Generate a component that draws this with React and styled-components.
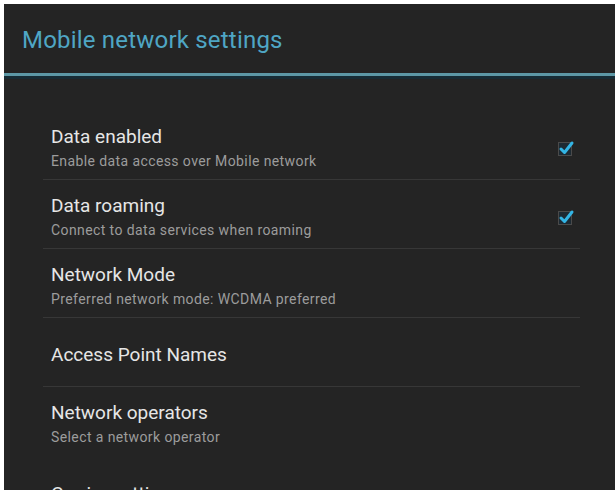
import React from "react";
import styled, { createGlobalStyle } from "styled-components";

const GlobalStyle = createGlobalStyle`
  html, body {
    margin: 0;
    padding: 0;
    background: #ffffff;
    overflow: hidden;
  }
  body {
    font-family: Roboto, "Noto Sans", "Liberation Sans", sans-serif;
  }
`;

const items = [
  { title: "Data enabled", summary: "Enable data access over Mobile network", checked: true },
  { title: "Data roaming", summary: "Connect to data services when roaming", checked: true },
  { title: "Network Mode", summary: "Preferred network mode: WCDMA preferred" },
  { title: "Access Point Names" },
  { title: "Network operators", summary: "Select a network operator", last: true },
];

const CheckMark = () => (
  <svg width="20" height="20" viewBox="0 0 20 20">
    <rect x="2.5" y="4.5" width="13" height="13" fill="#1d2a33" stroke="#4a4a4a" strokeWidth="1" />
    <path d="M5 11 L8.5 14.5 L16 5" fill="none" stroke="#33b5e5" strokeWidth="3" strokeLinecap="round" strokeLinejoin="round" />
  </svg>
);

export default function App() {
  return (
    <>
      <GlobalStyle />
      <Screen>
        <ActionBar>
          <ActionTitle>Mobile network settings</ActionTitle>
        </ActionBar>
        <HoloLine />
        <List>
          {items.map((item) => (
            <Row key={item.title} $last={item.last}>
              <Texts>
                <Title>{item.title}</Title>
                {item.summary && <Summary>{item.summary}</Summary>}
              </Texts>
              {item.checked && (
                <Check>
                  <CheckMark />
                </Check>
              )}
            </Row>
          ))}
          <CutRow>
            <Title>Carrier settings</Title>
          </CutRow>
        </List>
      </Screen>
    </>
  );
}

const Screen = styled.div`
  margin: 4px 0 0 4px;
  width: 611px;
  height: 486px;
  background: #242424;
  overflow: hidden;
  display: flex;
  flex-direction: column;
`;

const ActionBar = styled.div`
  height: 69px;
  box-sizing: border-box;
  display: flex;
  align-items: center;
  padding: 3px 0 0 18px;
  flex-shrink: 0;
`;

const ActionTitle = styled.div`
  font-size: 24px;
  color: #4fa6c4;
  letter-spacing: 0.2px;
`;

const HoloLine = styled.div`
  height: 3px;
  background: #5d98a6;
  border-bottom: 3px solid #172c35;
  flex-shrink: 0;
`;

const List = styled.div`
  padding-top: 32px;
  display: flex;
  flex-direction: column;
`;

const Row = styled.div`
  height: 69px;
  box-sizing: border-box;
  margin: 0 35px 0 39px;
  padding: 5px 4px 0 8px;
  display: flex;
  align-items: center;
  justify-content: space-between;
  border-bottom: 1px solid ${(p) => (p.$last ? "transparent" : "#373737")};
`;

const CutRow = styled(Row)`
  margin-top: 10px;
  align-items: flex-start;
  padding-top: 17px;
  border-bottom: none;
`;

const Texts = styled.div`
  display: flex;
  flex-direction: column;
`;

const Title = styled.div`
  font-size: 19px;
  line-height: 22px;
  color: #e6e6e6;
`;

const Summary = styled.div`
  font-size: 14px;
  line-height: 18px;
  letter-spacing: 0.4px;
  margin-top: 4px;
  color: #9c9c9c;
`;

const Check = styled.div`
  width: 20px;
  height: 20px;
  display: flex;
`;
